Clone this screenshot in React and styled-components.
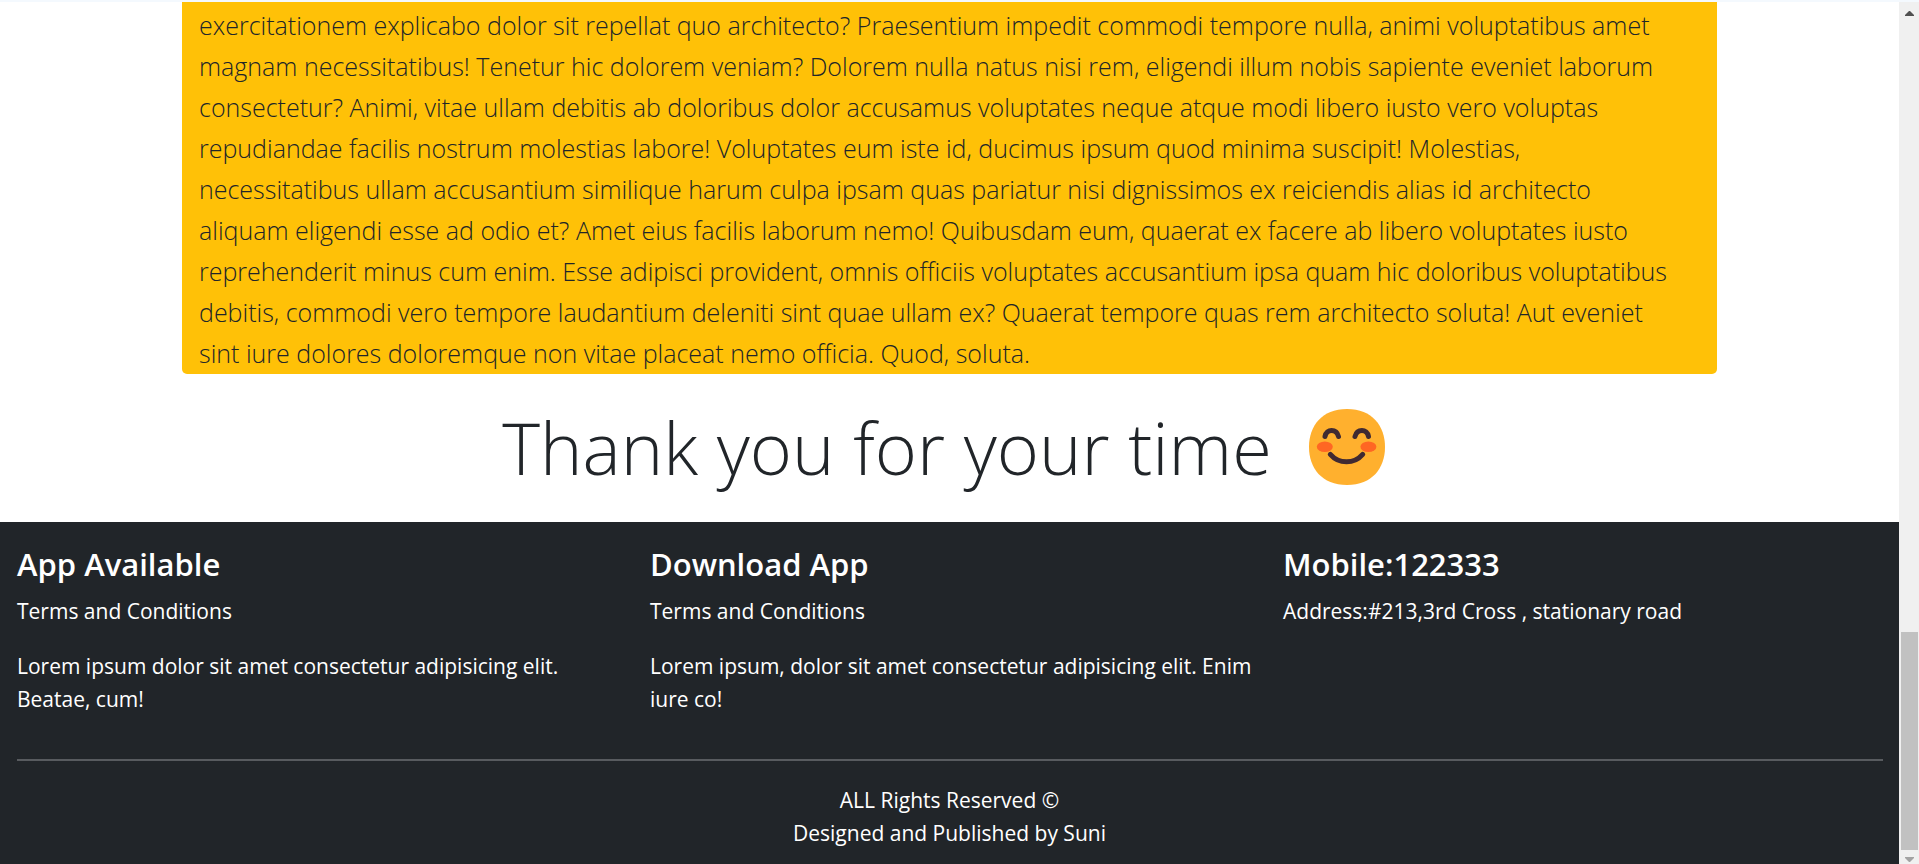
import React from 'react';
import styled, { createGlobalStyle } from 'styled-components';

const GlobalStyle = createGlobalStyle`
  *, *::before, *::after { box-sizing: border-box; }
  html, body { margin: 0; overflow: hidden; }
  body {
    background: #fff;
    color: #212529;
    font-family: "Segoe UI", "Open Sans", "Noto Sans", sans-serif;
    font-size: 21px;
    line-height: 33px;
  }
`;

const Window = styled.div`
  display: flex;
  flex-direction: column;
  height: 100vh;
`;

const TopStrip = styled.div`
  flex: 0 0 2px;
  background: #f4f9fe;
`;

const Viewport = styled.div`
  display: flex;
  flex: 1;
  min-height: 0;
`;

const Page = styled.div`
  display: flex;
  flex: 1;
  flex-direction: column;
  min-width: 0;
`;

const Article = styled.main`
  width: calc(100% - 364px);
  margin: 0 auto;
  padding: 3px 17px 0;
  border-radius: 0 0 5px 5px;
  background: #ffc107;
`;

const Lead = styled.p`
  margin: 0;
  font-size: 25px;
  font-weight: 300;
  line-height: 41px;
  white-space: pre-line;
`;

const Thanks = styled.h1`
  display: flex;
  align-items: center;
  justify-content: center;
  gap: 37px;
  margin: 0;
  padding: 27px 12px 29px 0;
  font-size: 72px;
  font-weight: 300;
  line-height: 92px;
`;

const Emoji = styled.svg`
  width: 76px;
  height: 76px;
`;

const Footer = styled.footer`
  flex: 1;
  padding-top: 23px;
  background: #212529;
  color: #fff;
`;

const Columns = styled.div`
  display: grid;
  grid-template-columns: repeat(3, minmax(0, 1fr));
`;

const Column = styled.section`
  padding: 0 17px;
  white-space: nowrap;
`;

const ColumnTitle = styled.h3`
  margin: 0 0 11px;
  font-size: 31px;
  font-weight: 600;
  line-height: 39px;
`;

const Text = styled.p`
  margin: 0 0 22px;
`;

const Divider = styled.hr`
  height: 2px;
  margin: 21px 16px 23px 17px;
  border: 0;
  background: #585b5f;
`;

const Credits = styled.p`
  margin: 0;
  text-align: center;
`;

const ScrollTrack = styled.div`
  display: flex;
  flex: 0 0 20px;
  flex-direction: column;
  align-items: center;
  justify-content: space-between;
  padding: 9px 0 2px;
  background: #f0f0f0;
`;

const ScrollEnd = styled.div`
  display: flex;
  flex-direction: column;
  align-items: center;
  justify-content: space-between;
  height: 27%;
`;

const Thumb = styled.div`
  width: 17px;
  height: calc(100% - 12px);
  background: #c1c1c1;
`;

const Arrow = styled.svg`
  width: 9px;
  height: 5px;
  fill: ${(p) => p.$color};
`;

const lines = [
  'exercitationem explicabo dolor sit repellat quo architecto? Praesentium impedit commodi tempore nulla, animi voluptatibus amet',
  'magnam necessitatibus! Tenetur hic dolorem veniam? Dolorem nulla natus nisi rem, eligendi illum nobis sapiente eveniet laborum',
  'consectetur? Animi, vitae ullam debitis ab doloribus dolor accusamus voluptates neque atque modi libero iusto vero voluptas',
  'repudiandae facilis nostrum molestias labore! Voluptates eum iste id, ducimus ipsum quod minima suscipit! Molestias,',
  'necessitatibus ullam accusantium similique harum culpa ipsam quas pariatur nisi dignissimos ex reiciendis alias id architecto',
  'aliquam eligendi esse ad odio et? Amet eius facilis laborum nemo! Quibusdam eum, quaerat ex facere ab libero voluptates iusto',
  'reprehenderit minus cum enim. Esse adipisci provident, omnis officiis voluptates accusantium ipsa quam hic doloribus voluptatibus',
  'debitis, commodi vero tempore laudantium deleniti sint quae ullam ex? Quaerat tempore quas rem architecto soluta! Aut eveniet',
  'sint iure dolores doloremque non vitae placeat nemo officia. Quod, soluta.',
];

function SmilingFace() {
  return (
    <Emoji viewBox="0 0 76 76" role="img" aria-label="Smiling face">
      <path
        d="M38 76C63.3 76 76 59 76 38C76 17 63.3 0 38 0C12.7 0 0 17 0 38C0 59 12.7 76 38 76Z"
        fill="#ffb02e"
      />
      <ellipse cx="15.8" cy="37.8" rx="8" ry="5.3" fill="#ff6723" />
      <ellipse cx="59.4" cy="37.8" rx="8" ry="5.3" fill="#ff6723" />
      <g fill="none" stroke="#402a32" strokeWidth="5" strokeLinecap="round">
        <path d="M16 27.5C17.5 19.5 27.5 19.5 29.5 27.5" />
        <path d="M46 27.5C48 19.5 58 19.5 59.5 27.5" />
        <path d="M21.3 45.3C30 55.3 45 55.3 53.7 45.3" />
      </g>
    </Emoji>
  );
}

export default function App() {
  return (
    <>
      <GlobalStyle />
      <Window>
        <TopStrip />
        <Viewport>
          <Page>
            <Article>
              <Lead>{lines.join('\n')}</Lead>
            </Article>
            <Thanks>
              Thank you for your time <SmilingFace />
            </Thanks>
            <Footer>
              <Columns>
                <Column>
                  <ColumnTitle>App Available</ColumnTitle>
                  <Text>Terms and Conditions</Text>
                  <Text>
                    Lorem ipsum dolor sit amet consectetur adipisicing elit.
                    <br />
                    Beatae, cum!
                  </Text>
                </Column>
                <Column>
                  <ColumnTitle>Download App</ColumnTitle>
                  <Text>Terms and Conditions</Text>
                  <Text>
                    Lorem ipsum, dolor sit amet consectetur adipisicing elit. Enim
                    <br />
                    iure co!
                  </Text>
                </Column>
                <Column>
                  <ColumnTitle>Mobile:122333</ColumnTitle>
                  <Text>Address:#213,3rd Cross , stationary road</Text>
                </Column>
              </Columns>
              <Divider />
              <Credits>
                ALL Rights Reserved ©
                <br />
                Designed and Published by Suni
              </Credits>
            </Footer>
          </Page>
          <ScrollTrack aria-hidden="true">
            <Arrow $color="#505050" viewBox="0 0 9 5">
              <path d="M4 0h1l4 4v1H0V4z" />
            </Arrow>
            <ScrollEnd>
              <Thumb />
              <Arrow $color="#a3a3a3" viewBox="0 0 9 5">
                <path d="M0 0h9v1L5 5H4L0 1z" />
              </Arrow>
            </ScrollEnd>
          </ScrollTrack>
        </Viewport>
      </Window>
    </>
  );
}
